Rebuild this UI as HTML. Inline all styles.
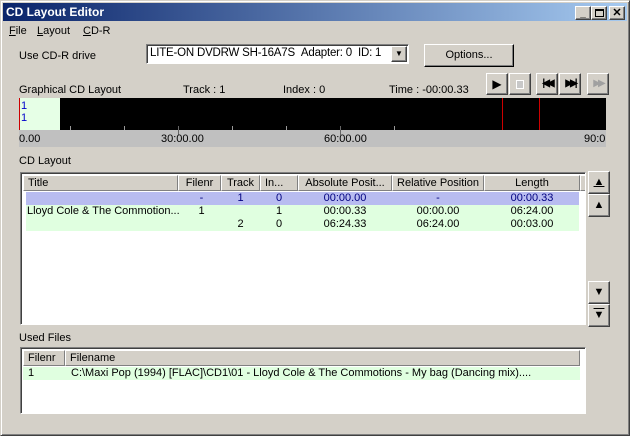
<!DOCTYPE html>
<html><head><style>
*{margin:0;padding:0;box-sizing:border-box}
body{width:630px;height:436px;background:#d4d0c8;font-family:"Liberation Sans",sans-serif;font-size:11px;color:#000;position:relative;overflow:hidden}
.a{position:absolute;white-space:nowrap}
.win{position:absolute;left:0;top:0;width:630px;height:436px;border:1px solid;border-color:#d4d0c8 #404040 #404040 #d4d0c8;box-shadow:inset 1px 1px #fff,inset -1px -1px #808080}
.raised{background:#d4d0c8;border:1px solid;border-color:#fff #404040 #404040 #fff;box-shadow:inset -1px -1px #808080}
.sunk{background:#fff;border:1px solid;border-color:#808080 #fff #fff #808080;box-shadow:inset 1px 1px #404040}
.hd{position:absolute;top:0;height:16px;background:#d4d0c8;border:1px solid;border-color:#fff #808080 #808080 #fff;padding:1px 4px;overflow:hidden}
.row{position:absolute;height:13px}
.c{position:absolute;text-align:center;top:0}
.tk{position:absolute;width:1px;background:#999}
</style></head><body>
<div class="win"></div>
<div class="a" style="left:3px;top:3px;width:624px;height:18px;background:linear-gradient(90deg,#0a246a,#a6caf0)"></div>
<div class="a" style="left:6px;top:5px;color:#fff;font-weight:bold;font-size:12px">CD Layout Editor</div>
<div class="a raised" style="left:575px;top:6px;width:16px;height:14px;font-weight:bold;font-size:10px;text-align:center;line-height:14px">_</div>
<div class="a raised" style="left:591px;top:6px;width:16px;height:14px"><div style="position:absolute;left:3px;top:2px;width:9px;height:8px;border:1px solid #000;border-top-width:2px"></div></div>
<div class="a raised" style="left:609px;top:6px;width:16px;height:14px;font-weight:bold;font-size:11px;text-align:center;line-height:12px">✕</div>
<div class="a" style="left:9px;top:25px"><u>F</u>ile</div>
<div class="a" style="left:37px;top:25px"><u>L</u>ayout</div>
<div class="a" style="left:83px;top:25px"><u>C</u>D-R</div>
<div class="a" style="left:19px;top:50px">Use CD-R drive</div>
<div class="a sunk" style="left:146px;top:44px;width:263px;height:20px"></div>
<div class="a" style="left:150px;top:47px;font-size:11.5px;letter-spacing:-0.2px">LITE-ON DVDRW SH-16A7S&nbsp;&nbsp;Adapter: 0&nbsp;&nbsp;ID: 1</div>
<div class="a raised" style="left:391px;top:46px;width:16px;height:16px;font-size:8px;text-align:center;line-height:14px">▼</div>
<div class="a raised" style="left:424px;top:44px;width:90px;height:23px;text-align:center;line-height:21px;border-color:#fff #000 #000 #fff">Options...</div>
<div class="a" style="left:19px;top:84px">Graphical CD Layout</div>
<div class="a" style="left:183px;top:84px">Track : 1</div>
<div class="a" style="left:283px;top:84px">Index : 0</div>
<div class="a" style="left:389px;top:84px">Time : -00:00.33</div>
<div class="a raised" style="left:486px;top:73px;width:22px;height:22px;text-align:center;line-height:20px;font-size:12px">▶</div>
<div class="a raised" style="left:509px;top:73px;width:22px;height:22px"><div style="position:absolute;left:6px;top:6px;width:8px;height:9px;background:#c8c8c8;border:1px solid #fff"></div></div>
<div class="a raised" style="left:536px;top:73px;width:22px;height:22px;text-align:center;line-height:20px;font-size:10px;font-weight:bold;letter-spacing:-3px">|◀◀</div>
<div class="a raised" style="left:559px;top:73px;width:22px;height:22px;text-align:center;line-height:20px;font-size:10px;font-weight:bold;letter-spacing:-3px">▶▶|</div>
<div class="a raised" style="left:587px;top:73px;width:22px;height:22px;text-align:center;line-height:20px;font-size:10px;color:#a0a0a0;letter-spacing:-3px">▶▶</div>
<div class="a" style="left:19px;top:98px;width:587px;height:32px;background:#000"></div>
<div class="a" style="left:19px;top:98px;width:1px;height:32px;background:#c00"></div>
<div class="a" style="left:20px;top:98px;width:40px;height:32px;background:#e6ffe6;color:#00c;line-height:12px;padding-top:2px;padding-left:1px">1<br>1</div>
<div class="a" style="left:502px;top:98px;width:1px;height:32px;background:#c00"></div>
<div class="a" style="left:539px;top:98px;width:1px;height:32px;background:#c00"></div>
<div class="a" style="left:19px;top:130px;width:587px;height:17px;background:#c0c0c0"></div>
<div class="tk" style="left:70px;top:126px;height:4px"></div>
<div class="tk" style="left:124px;top:126px;height:4px"></div>
<div class="tk" style="left:178px;top:126px;height:9px;background:#666"></div>
<div class="tk" style="left:232px;top:126px;height:4px"></div>
<div class="tk" style="left:286px;top:126px;height:4px"></div>
<div class="tk" style="left:340px;top:126px;height:9px;background:#666"></div>
<div class="tk" style="left:394px;top:126px;height:4px"></div>
<div class="a" style="left:19px;top:133px">0.00</div>
<div class="a" style="left:161px;top:133px">30:00.00</div>
<div class="a" style="left:324px;top:133px">60:00.00</div>
<div class="a" style="left:584px;top:133px">90:0</div>
<div class="a" style="left:19px;top:155px">CD Layout</div>
<div class="a sunk" style="left:20px;top:172px;width:566px;height:153px;overflow:hidden">
<div class="hd" style="left:2px;top:2px;width:155px">Title</div>
<div class="hd" style="left:157px;top:2px;width:43px;text-align:center">Filenr</div>
<div class="hd" style="left:200px;top:2px;width:39px;text-align:center">Track</div>
<div class="hd" style="left:239px;top:2px;width:38px">In...</div>
<div class="hd" style="left:277px;top:2px;width:94px;text-align:center">Absolute Posit...</div>
<div class="hd" style="left:371px;top:2px;width:92px;text-align:center">Relative Position</div>
<div class="hd" style="left:463px;top:2px;width:96px;text-align:center">Length</div>
<div class="hd" style="left:559px;top:2px;width:10px"></div>
<div class="row" style="left:5px;top:19px;width:553px;background:#b8bcf0;color:#000080">
<span class="c" style="left:154px;width:43px">-</span><span class="c" style="left:195px;width:39px">1</span><span class="c" style="left:234px;width:38px">0</span><span class="c" style="left:272px;width:94px">00:00.00</span><span class="c" style="left:366px;width:92px">-</span><span class="c" style="left:458px;width:96px">00:00.33</span></div>
<div class="row" style="left:5px;top:32px;width:553px;height:26px;background:#e0ffe0"></div>
<div class="row" style="left:5px;top:32px;width:553px">
<span class="a" style="left:1px">Lloyd Cole &amp; The Commotion...</span><span class="c" style="left:154px;width:43px">1</span><span class="c" style="left:234px;width:38px">1</span><span class="c" style="left:272px;width:94px">00:00.33</span><span class="c" style="left:366px;width:92px">00:00.00</span><span class="c" style="left:458px;width:96px">06:24.00</span></div>
<div class="row" style="left:5px;top:45px;width:553px">
<span class="c" style="left:195px;width:39px">2</span><span class="c" style="left:234px;width:38px">0</span><span class="c" style="left:272px;width:94px">06:24.33</span><span class="c" style="left:366px;width:92px">06:24.00</span><span class="c" style="left:458px;width:96px">00:03.00</span></div>
</div>
<div class="a raised" style="left:588px;top:171px;width:22px;height:23px;text-align:center;line-height:20px;font-size:11px;text-decoration:underline">▲</div>
<div class="a raised" style="left:588px;top:194px;width:22px;height:23px;text-align:center;line-height:21px;font-size:11px">▲</div>
<div class="a raised" style="left:588px;top:281px;width:22px;height:23px;text-align:center;line-height:21px;font-size:11px">▼</div>
<div class="a raised" style="left:588px;top:304px;width:22px;height:23px;text-align:center;line-height:21px;font-size:11px;text-decoration:overline">▼</div>
<div class="a" style="left:19px;top:332px">Used Files</div>
<div class="a sunk" style="left:20px;top:347px;width:566px;height:67px;overflow:hidden">
<div class="hd" style="left:2px;top:2px;width:42px">Filenr</div>
<div class="hd" style="left:44px;top:2px;width:515px">Filename</div>
<div class="row" style="left:2px;top:19px;width:557px;background:#e0ffe0">
<span class="a" style="left:5px">1</span><span class="a" style="left:48px">C:\Maxi Pop (1994) [FLAC]\CD1\01 - Lloyd Cole &amp; The Commotions - My bag (Dancing mix)....</span></div>
</div>
</body></html>
